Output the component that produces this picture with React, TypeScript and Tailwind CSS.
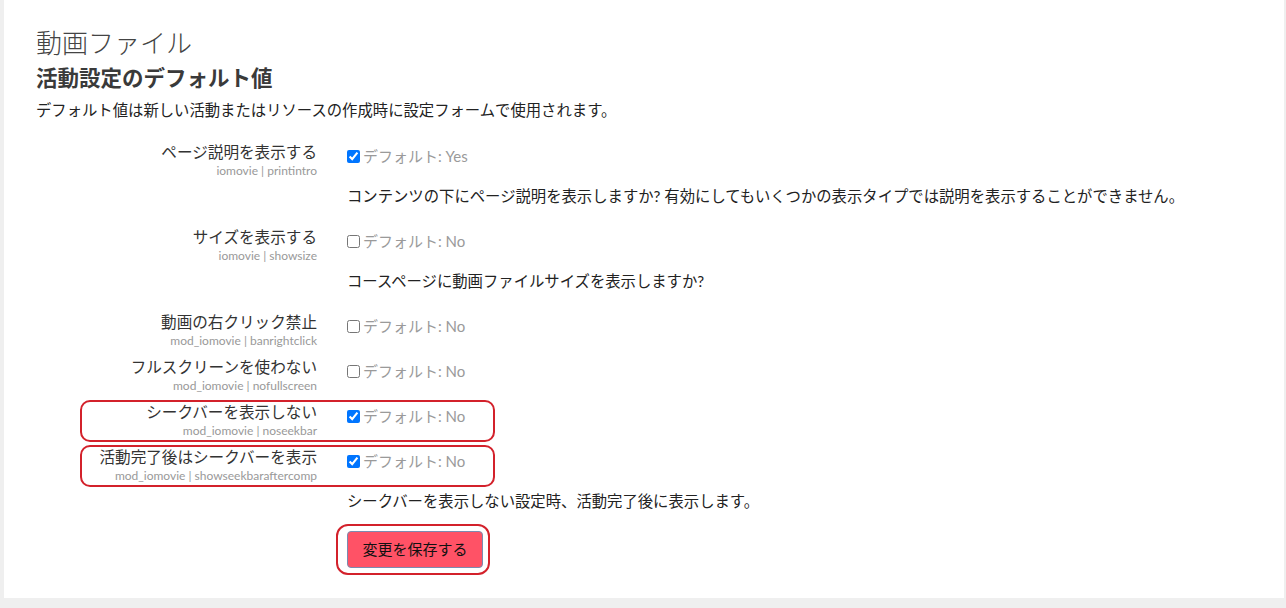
const font = { fontFamily: 'Lato, "Noto Sans CJK JP", sans-serif' };

type Setting = {
    label: string;
    name: string;
    checked: boolean;
    def: string;
    desc?: string;
    mark?: boolean;
};

const settings: Setting[] = [
    {
        label: "ページ説明を表示する",
        name: "iomovie | printintro",
        checked: true,
        def: "Yes",
        desc: "コンテンツの下にページ説明を表示しますか? 有効にしてもいくつかの表示タイプでは説明を表示することができません。",
    },
    {
        label: "サイズを表示する",
        name: "iomovie | showsize",
        checked: false,
        def: "No",
        desc: "コースページに動画ファイルサイズを表示しますか?",
    },
    { label: "動画の右クリック禁止", name: "mod_iomovie | banrightclick", checked: false, def: "No" },
    { label: "フルスクリーンを使わない", name: "mod_iomovie | nofullscreen", checked: false, def: "No" },
    { label: "シークバーを表示しない", name: "mod_iomovie | noseekbar", checked: true, def: "No", mark: true },
    {
        label: "活動完了後はシークバーを表示",
        name: "mod_iomovie | showseekbaraftercomp",
        checked: true,
        def: "No",
        desc: "シークバーを表示しない設定時、活動完了後に表示します。",
        mark: true,
    },
];

function SettingRow({ s }: { s: Setting }) {
    return (
        <div className={`relative flex ${s.desc ? "mb-[19px]" : "mb-[7px]"}`}>
            {s.mark && (
                <div className="absolute left-[44px] -top-[1px] w-[415px] h-[42px] rounded-[10px] border-2 border-[#d3212b] pointer-events-none"></div>
            )}
            <div className="w-[281px] shrink-0 text-right">
                <div className="text-[15.6px] leading-[22px] text-[#333]">{s.label}</div>
                <div className="text-[12px] leading-[16px] text-[#999]">{s.name}</div>
            </div>
            <div className="pl-[30px] pt-[4px]">
                <label className="flex items-center h-[22px] text-[15px] text-[#9a9a9a]">
                    <input
                        type="checkbox"
                        defaultChecked={s.checked}
                        className="w-[13px] h-[13px] mr-[3px]"
                    />
                    デフォルト: {s.def}
                </label>
                {s.desc && (
                    <div className="mt-[18px] text-[15.35px] leading-[22px] text-[#222]">{s.desc}</div>
                )}
            </div>
        </div>
    );
}

export default function App() {
    return (
        <div className="w-[1286px] h-[608px] bg-[#efefef] overflow-hidden" style={font}>
            <div className="ml-[4px] w-[1280px] h-[598px] bg-white pl-[32px] pt-[26px]">
                <h2 className="text-[26px] leading-[34px] font-light text-[#444]">動画ファイル</h2>
                <h3 className="mt-[3px] text-[21.5px] leading-[30px] font-bold text-[#3a3a3a]">活動設定のデフォルト値</h3>
                <p className="mt-[6px] text-[15.35px] leading-[22px] text-[#222]">
                    デフォルト値は新しい活動またはリソースの作成時に設定フォームで使用されます。
                </p>

                <div className="mt-[20px]">
                    {settings.map((s) => (
                        <SettingRow key={s.name} s={s} />
                    ))}
                </div>

                <div className="relative ml-[311px] w-[136px]">
                    <div className="absolute -left-[11px] -top-[7px] w-[154px] h-[51px] rounded-[12px] border-2 border-[#d3212b]"></div>
                    <button className="relative w-[136px] h-[37px] rounded-[4px] bg-[#ff5266] border border-[#7b8bb0] text-[15px] text-[#111]">
                        変更を保存する
                    </button>
                </div>
            </div>
        </div>
    );
}
